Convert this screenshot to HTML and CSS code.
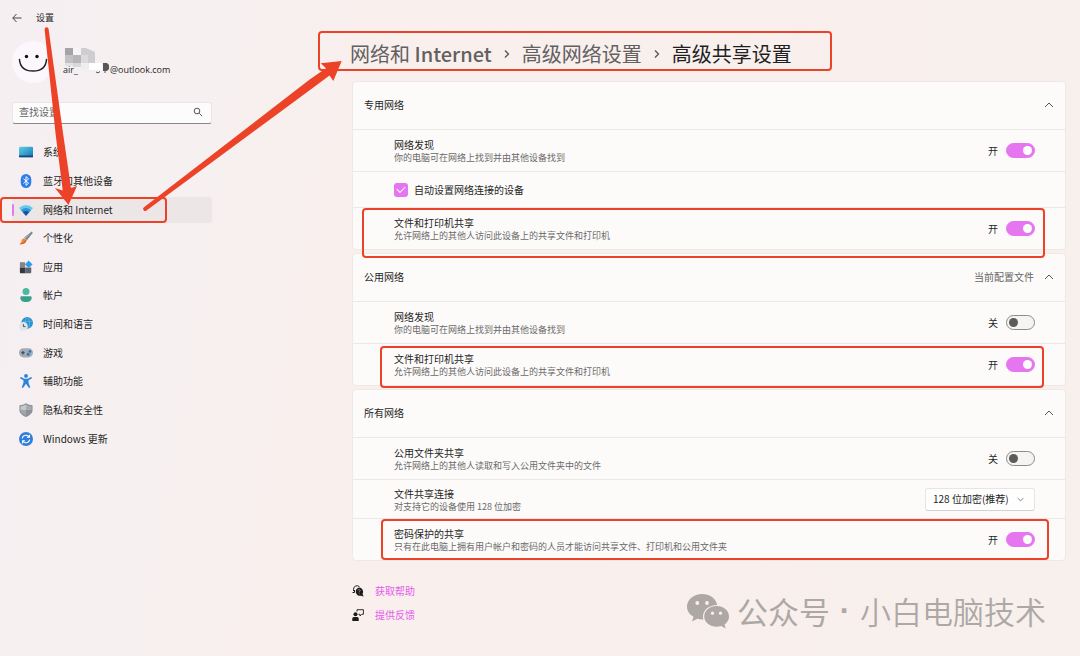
FILE: index.html
```html
<!DOCTYPE html>
<html lang="zh-CN">
<head>
<meta charset="utf-8">
<title>设置</title>
<link rel="stylesheet" href="styles.css">
</head>
<body>
<div class="app">
  <aside class="sidebar">
    <div class="titlebar">
      <button class="back" aria-label="返回"><svg width="10" height="10" viewBox="0 0 10 10" fill="none" stroke="#444" stroke-width="1"><path d="M4.500 1 .8 5l3.700 4M.8 5H9.500"/></svg></button>
      <span>设置</span>
    </div>
    <div class="account">
      <svg class="avatar" width="42" height="42" viewBox="0 0 42 42"><circle cx="21" cy="21" r="21" fill="#fbf7fd"/><circle cx="14.500" cy="15.500" r="1.700" fill="#111"/><circle cx="25" cy="15.500" r="1.700" fill="#111"/><path d="M7.500 18.500C8 26 13 30 21 30s13-4 13.500-11.500" fill="none" stroke="#222" stroke-width="1.500" stroke-linecap="round"/></svg>
      <div class="mail">
        <span>air_</span><span class="mail-host">@outlook.com</span>
        <svg class="mosaic" width="48" height="28" viewBox="0 0 48 28"><path fill="#a5a3a5" d="M2 0h8v7H2z"/><path fill="#f7f4f6" d="M10 0h8v7h-8z"/><path fill="#cfcdcf" d="M18 0h5l9 4v11H18z"/><path fill="#c3c1c3" d="M2 7h8v8H2z"/><path fill="#b7b5b7" d="M10 7h8v8h-8z"/><path fill="#dcdadc" d="M18 7h7v8h-7z"/><path fill="#e3e1e3" d="M2 15h8v3H2z"/><path fill="#d9d7d9" d="M10 15h8v4h-8z"/><path fill="#efedef" d="M18 15h8v7h-8z"/><path fill="#fff" d="M26 15h13v7H26z"/><path fill="#59575a" d="M40 15h4l2 2v4l-2 2h-4z"/><path d="M33 24q2 2 4-.5M42 23v2" stroke="#555" fill="none"/></svg>
      </div>
    </div>
    <label class="search">
      <input type="text" placeholder="查找设置" aria-label="查找设置">
      <svg width="10" height="10" viewBox="0 0 10 10" fill="none" stroke="#555"><circle cx="4" cy="4" r="2.800"/><path d="m6.200 6.200 3 3"/></svg>
    </label>
    <nav class="nav">
      <a href="#"><svg viewBox="0 0 16 16"><defs><linearGradient id="g1" x2="1" y2="1"><stop stop-color="#5fd0e4"/><stop offset="1" stop-color="#1573b8"/></linearGradient></defs><rect x="0" y="2" width="16" height="12" rx="1" fill="url(#g1)"/><path d="M0 12h16v1a1 1 0 0 1-1 1H1a1 1 0 0 1-1-1z" fill="#134a78"/></svg>系统</a>
      <a href="#"><svg viewBox="0 0 16 16"><rect x="2" y="0" width="12" height="16" rx="6" fill="#2b7de9"/><path d="m5 5.300 6 5.200L8 13V3l3 2.500-6 5.200" fill="none" stroke="#fff" stroke-width="1.100"/></svg>蓝牙和其他设备</a>
      <a href="#" class="active" aria-current="page"><svg viewBox="0 0 16 16"><path d="M0 5.800q8-7 16 0L8 14.500z" fill="#65c9ed"/><path d="M2.200 8.200q5.800-5 11.600 0L8 14.500z" fill="#2f94d6"/><path d="M4.400 10.600q3.600-2.800 7.200 0L8 14.500z" fill="#17529c"/></svg>网络和 Internet<span class="mark mark-nav"></span></a>
      <a href="#"><svg viewBox="0 0 16 16"><path d="M14.700.7q1.300.5.600 2L9 10.500 6 7.500z" fill="#798088"/><path d="M14.700.7 6 7.500 7.500 9z" fill="#a7afb6"/><path d="m6 8.200 2.600 2.300C8 14 4.500 15.500.500 15c1.700-1.300 2-2.500 2.500-4.500.5-1.500 1.700-2.200 3-2.300z" fill="#f08a3c"/><path d="M.5 15c4 .5 7.500-1 8.100-4.500l-1-1C7 12 4 14 .5 15z" fill="#d9601d"/></svg>个性化</a>
      <a href="#"><svg viewBox="0 0 16 16"><path fill="#82878d" d="M1 2.500h6v6H1z"/><path fill="#33393f" d="M1 8.500h6.500V15H2a1 1 0 0 1-1-1z"/><path fill="#5d646b" d="M7.500 8.500H14V14a1 1 0 0 1-1 1H7.500z"/><path fill="#329be5" d="M11 .5 15.500 5 11 9.200 6.800 5z"/></svg>应用</a>
      <a href="#"><svg viewBox="0 0 16 16"><circle cx="8" cy="4" r="4" fill="#4bb8a0"/><path d="M1.500 11A1.500 1.500 0 0 1 3 9.500h10a1.500 1.500 0 0 1 1.500 1.500c0 3-2.500 5-6.500 5s-6.500-2-6.500-5z" fill="#379f8b"/></svg>帐户</a>
      <a href="#"><svg viewBox="0 0 16 16"><circle cx="9.300" cy="6.700" r="6.700" fill="#2b91cf"/><path d="M4 5h11M9 .5c-3 4-2 8 1 12m0-12q4 5 1 12" stroke="#5ac0e0" stroke-width=".8" fill="none"/><circle cx="5" cy="10.700" r="5" fill="#dfe5e8"/><path d="M5 8v3h2.500" fill="none" stroke="#444"/></svg>时间和语言</a>
      <a href="#"><svg viewBox="0 0 16 16"><rect x="0" y="2.500" width="16" height="10.500" rx="5.200" fill="#a4abb4"/><path d="M4.500 5.800v4M2.500 7.800h4" stroke="#3a4048" stroke-width="1.200"/><circle cx="12.500" cy="6.300" r="1.500" fill="#246ec4"/><circle cx="10.500" cy="9.500" r="1.500" fill="#246ec4"/></svg>游戏</a>
      <a href="#"><svg viewBox="0 0 16 16" fill="#2d83d6"><circle cx="8" cy="2.200" r="2.200"/><path d="M2.300 3.500 6 5.300h4l3.700-1.800q1.300.3.800 1.600L10.900 7v3l2 5.300q-.9 1-1.900.2L8 11l-3 4.500q-1 .8-1.900-.2l2-5.300V7L1.500 5.100q-.4-1.300.8-1.600z"/></svg>辅助功能</a>
      <a href="#"><svg viewBox="0 0 16 16"><path d="M8 .3q3.300 2.200 7.500 2.400v5.300c0 3.700-3.300 6.200-7.500 8-4.200-1.800-7.500-4.300-7.500-8V2.700Q4.700 2.500 8 .3z" fill="#8c9298"/><path d="M8 1.800q2.900 1.800 6.200 2.100V8H8z" fill="#a8adb2"/><path d="M8 1.800Q5.100 3.600 1.800 3.900V8H8z" fill="#c5c9cc"/><path d="M1.800 8H8v6.600C4.500 13 1.800 11 1.800 8z" fill="#a1a6ab"/></svg>隐私和安全性</a>
      <a href="#"><svg viewBox="0 0 16 16"><circle cx="8" cy="8" r="8" fill="#2f7fd8"/><path d="M3.800 7.200c.6-4 6-4.600 8-1.400m.4 3c-.6 4-6 4.600-8 1.400M12 3v3H9M4 13v-3h3" fill="none" stroke="#fff" stroke-width="1.200"/></svg>Windows 更新</a>
    </nav>
  </aside>

  <main class="main">
    <div class="crumbs">
      <a href="#">网络和 <b>Internet</b></a>
      <svg width="6" height="10" viewBox="0 0 6 10"><path d="m1 1.500 3.500 3.500L1 8.500"/></svg>
      <a href="#">高级网络设置</a>
      <svg width="6" height="10" viewBox="0 0 6 10"><path d="m1 1.500 3.500 3.500L1 8.500"/></svg>
      <h1>高级共享设置</h1>
      <span class="mark mark-title"></span>
    </div>

    <div class="panels">
      <section class="panel">
        <button class="panel-head" aria-expanded="true"><span>专用网络</span><svg class="chev" viewBox="0 0 10 6"><path d="m1 5 4-4 4 4"/></svg></button>
        <div class="row">
          <div class="desc"><label for="s1">网络发现</label><small>你的电脑可在网络上找到并由其他设备找到</small></div>
          <span>开</span><input class="switch" id="s1" type="checkbox" role="switch" checked>
        </div>
        <div class="row row-check">
          <input class="check" id="c1" type="checkbox" checked><label for="c1">自动设置网络连接的设备</label>
        </div>
        <div class="row">
          <div class="desc"><label for="s2">文件和打印机共享</label><small>允许网络上的其他人访问此设备上的共享文件和打印机</small></div>
          <span>开</span><input class="switch" id="s2" type="checkbox" role="switch" checked>
          <span class="mark mark-private"></span>
        </div>
      </section>

      <section class="panel">
        <button class="panel-head" aria-expanded="true"><span>公用网络</span><span class="current">当前配置文件</span><svg class="chev" viewBox="0 0 10 6"><path d="m1 5 4-4 4 4"/></svg></button>
        <div class="row">
          <div class="desc"><label for="s3">网络发现</label><small>你的电脑可在网络上找到并由其他设备找到</small></div>
          <span>关</span><input class="switch" id="s3" type="checkbox" role="switch">
        </div>
        <div class="row">
          <div class="desc"><label for="s4">文件和打印机共享</label><small>允许网络上的其他人访问此设备上的共享文件和打印机</small></div>
          <span>开</span><input class="switch" id="s4" type="checkbox" role="switch" checked>
          <span class="mark mark-public"></span>
        </div>
      </section>

      <section class="panel">
        <button class="panel-head" aria-expanded="true"><span>所有网络</span><svg class="chev" viewBox="0 0 10 6"><path d="m1 5 4-4 4 4"/></svg></button>
        <div class="row">
          <div class="desc"><label for="s5">公用文件夹共享</label><small>允许网络上的其他人读取和写入公用文件夹中的文件</small></div>
          <span>关</span><input class="switch" id="s5" type="checkbox" role="switch">
        </div>
        <div class="row row-select">
          <div class="desc"><label for="enc">文件共享连接</label><small>对支持它的设备使用 128 位加密</small></div>
          <div class="select"><select id="enc"><option>128 位加密(推荐)</option></select><svg viewBox="0 0 10 6"><path d="m1 1 4 4 4-4"/></svg></div>
        </div>
        <div class="row">
          <div class="desc"><label for="s6">密码保护的共享</label><small>只有在此电脑上拥有用户帐户和密码的人员才能访问共享文件、打印机和公用文件夹</small></div>
          <span>开</span><input class="switch" id="s6" type="checkbox" role="switch" checked>
          <span class="mark mark-all"></span>
        </div>
      </section>
    </div>

    <div class="help">
      <a href="#"><svg width="12" height="12" viewBox="0 0 12 12"><path d="M1.500 6V4.500a3.500 3.500 0 0 1 6-2.700M.5 7.500h2V5" fill="none" stroke="#1b1b1b"/><path d="M7 2.500a4.200 4.200 0 0 1 3.500 6.400l1.200 2.600-2.800-.8A4.200 4.200 0 1 1 7 2.500z" fill="#1b1b1b"/><path d="M6 5.500q.2-1 1.200-1 1.300.2 1 1.300L7.200 7v.5m0 .8v.9" fill="none" stroke="#aaa" stroke-width=".7"/></svg>获取帮助</a>
      <a href="#"><svg width="12" height="12" viewBox="0 0 12 12"><circle cx="3.500" cy="5.300" r="2" fill="#1b1b1b"/><path d="M.3 12V9.500q0-1.500 1.500-1.500h3.400q1.500 0 1.500 1.500V12z" fill="#1b1b1b"/><path d="M5 2.500V.7h6.400v4.600H9.700L8 7V5.300H6.500" fill="none" stroke="#1b1b1b" stroke-width=".9"/></svg>提供反馈</a>
    </div>
  </main>

  <div class="watermark">
    <svg width="42" height="35" viewBox="0 0 42 35"><path fill="#ada8a6" d="M15 0c8 0 14 4.600 15.200 11C22 11 16 16 16 22.500c0 1 .1 2 .4 2.900-2 .1-4-.1-6-.7L5 27.500l1.500-4.700C2.500 20.500 0 17 0 12.800 0 5.600 6.700 0 15 0z"/><path fill="#ada8a6" d="M29.700 12C36.500 12 42 16.600 42 22.400c0 3.400-1.700 6-4.500 8l1.200 4-4.500-2.400c-1.500.5-3 .7-4.500.7-7 0-12.500-4.500-12.500-10.300S22.800 12 29.700 12z"/><g fill="#f9efed"><circle cx="10.300" cy="9" r="1.900"/><circle cx="20" cy="9" r="1.900"/><circle cx="25.500" cy="19.200" r="1.600"/><circle cx="33.500" cy="19.200" r="1.600"/></g></svg>
    <span class="account-kind">公众号</span><span class="dot">·</span><span>小白电脑技术</span>
  </div>

  <svg class="arrows" width="360" height="220" viewBox="0 0 360 220" aria-hidden="true"><path d="M44.600 29.500a2 2 0 0 1 4-.5L63.300 135 71 188l6-2-8.500 19L55 188l7.700 2.500L55.700 135z"/><path d="M144 207.300 310 79.300 326 68.300 320.700 63.300 341.700 61 333.300 81 329.500 75.500 310 90 146.500 210.500a2 2 0 0 1-2.500-3.200z"/></svg>
</div>
</body>
</html>
```
FILE: styles.css
```css
* { box-sizing: border-box; }

body {
  margin: 0;
  min-height: 100vh;
  background: linear-gradient(100deg, #f5eff2 0, #f6f0f0 18%, #f9efed 34%, #f8f0ed 100%);
  color: #1f1f1f;
  font: 10px/14px "Noto Sans CJK SC", "Noto Sans", sans-serif;
}

button, input, select { font: inherit; color: inherit; margin: 0; }
button { border: 0; background: none; padding: 0; }
a { color: inherit; text-decoration: none; }

.app {
  position: relative;
  display: grid;
  grid-template-columns: 200px 1fr;
  column-gap: 140px;
  padding: 0 14px 0 12px;
  min-height: 100vh;
}

/* Sidebar */
.titlebar { display: flex; align-items: center; gap: 14px; height: 35px; font-size: 9px; }
.back { display: flex; }
.account { display: flex; align-items: center; gap: 9px; height: 42px; margin-top: 6px; }
.avatar { flex: none; }
.mail { position: relative; display: flex; gap: 32px; padding-top: 16px; font-family: "Open Sans", sans-serif; font-size: 9px; }
.mosaic { position: absolute; left: 0; top: 1px; }

.search {
  display: flex;
  align-items: center;
  height: 22px;
  margin-top: 19px;
  padding: 0 8px 2px 6px;
  background: #fdfcfd;
  border: 1px solid #ebe5e7;
  border-bottom-color: #8b8788;
  border-radius: 3px;
}
.search input { flex: 1; min-width: 0; padding: 0; border: 0; background: none; outline: 0; }
.search input::placeholder { color: #666; opacity: 1; }

.nav {
  display: grid;
  grid-template-rows: repeat(11, 1fr);
  align-items: center;
  height: 315px;
  margin-top: 14px;
}
.nav a { position: relative; display: flex; align-items: center; gap: 10px; height: 26px; padding-left: 7px; border-radius: 3px; }
.nav svg { width: 14px; height: 14px; }
.nav .active { background: #ece6e7; }
.nav .active::before { content: ""; position: absolute; left: 0; top: 7px; width: 2px; height: 12px; border-radius: 1px; background: #e878ee; }

/* Breadcrumb */
.crumbs { position: relative; display: flex; align-items: center; gap: 12px; height: 40px; margin: 34px 0 7px -2px; font-size: 20px; line-height: 28px; color: #626060; }
.crumbs b { font-weight: 500; }
.crumbs h1 { margin: 0; font: inherit; color: #1f1f1f; }
.crumbs svg { fill: none; stroke: #555; stroke-width: 1.3; }

/* Setting groups */
.panels { display: grid; gap: 3px; }
.panel { background: #fcfbfa; border: 1px solid #f0e8e6; border-radius: 4px; }
.panel-head { display: flex; align-items: center; gap: 10px; width: 100%; height: 47px; padding: 0 11px 1px; text-align: left; }
.panel-head span:first-child { flex: 1; }
.current { color: #666; }
.chev { width: 10px; height: 6px; fill: none; stroke: #555; }

.row { position: relative; display: flex; align-items: center; gap: 8px; height: 42px; padding: 0 30px 0 41px; border-top: 1px solid #ebe8e7; }
.row-check { height: 36px; gap: 6px; }
.row-select { height: 39px; }
.desc { flex: 1; display: grid; padding-top: 2px; line-height: 13px; }
.desc small { font-size: 9px; line-height: 14px; color: #6b6969; }

.switch { appearance: none; display: flex; align-items: center; width: 29px; height: 15px; padding: 0 2px; border: 1px solid #8c8a8a; border-radius: 8px; background: #f5f4f3; }
.switch::before { content: ""; width: 9px; height: 9px; border-radius: 50%; background: #5c5b5b; }
.switch:checked { justify-content: flex-end; border-color: #e676ef; background: #e676ef; }
.switch:checked::before { background: #fff; }

.check { appearance: none; display: grid; place-items: center; width: 14px; height: 14px; border-radius: 3px; background: #e676ef; }
.check:checked::before { content: ""; width: 7px; height: 4px; margin-bottom: 2px; border: solid #fff; border-width: 0 0 1px 1px; transform: rotate(-45deg); }

.select { display: flex; align-items: center; position: relative; }
.select select { appearance: none; width: 110px; height: 23px; padding: 0 7px; border: 1px solid #e8e5e4; border-bottom-color: #d3d0cf; border-radius: 3px; background: #fefefe; }
.select svg { position: absolute; right: 11px; width: 7px; height: 5px; fill: none; stroke: #555; pointer-events: none; }

.help { display: grid; gap: 10px; margin-top: 23px; justify-content: start; }
.help a { display: flex; align-items: center; gap: 11px; color: #e45cec; }

/* Annotations drawn over the window */
.mark { position: absolute; border: 2px solid #ec4328; border-radius: 4px; pointer-events: none; z-index: 1; }
.mark-nav { left: -12px; right: 45px; top: 0; bottom: 0; }
.mark-title { left: -32px; right: 234px; top: -3px; bottom: 3px; }
.mark-private { left: 9px; right: 20px; top: 0; bottom: -9px; }
.mark-public { left: 27px; right: 21px; top: 2px; bottom: -3px; }
.mark-all { left: 28px; right: 16px; top: 0; bottom: 0; }
.arrows { position: absolute; left: 0; top: 0; fill: #ec4328; z-index: 2; pointer-events: none; }

.watermark { position: absolute; right: 34px; bottom: 23px; display: flex; align-items: center; color: #ada8a6; font-size: 31px; line-height: 44px; font-weight: 350; }
.watermark svg { margin-right: 8px; }
.watermark .account-kind { font-weight: 400; }
.watermark .dot { width: 30px; font-family: "Liberation Sans", sans-serif; font-weight: 700; text-align: center; }
```
